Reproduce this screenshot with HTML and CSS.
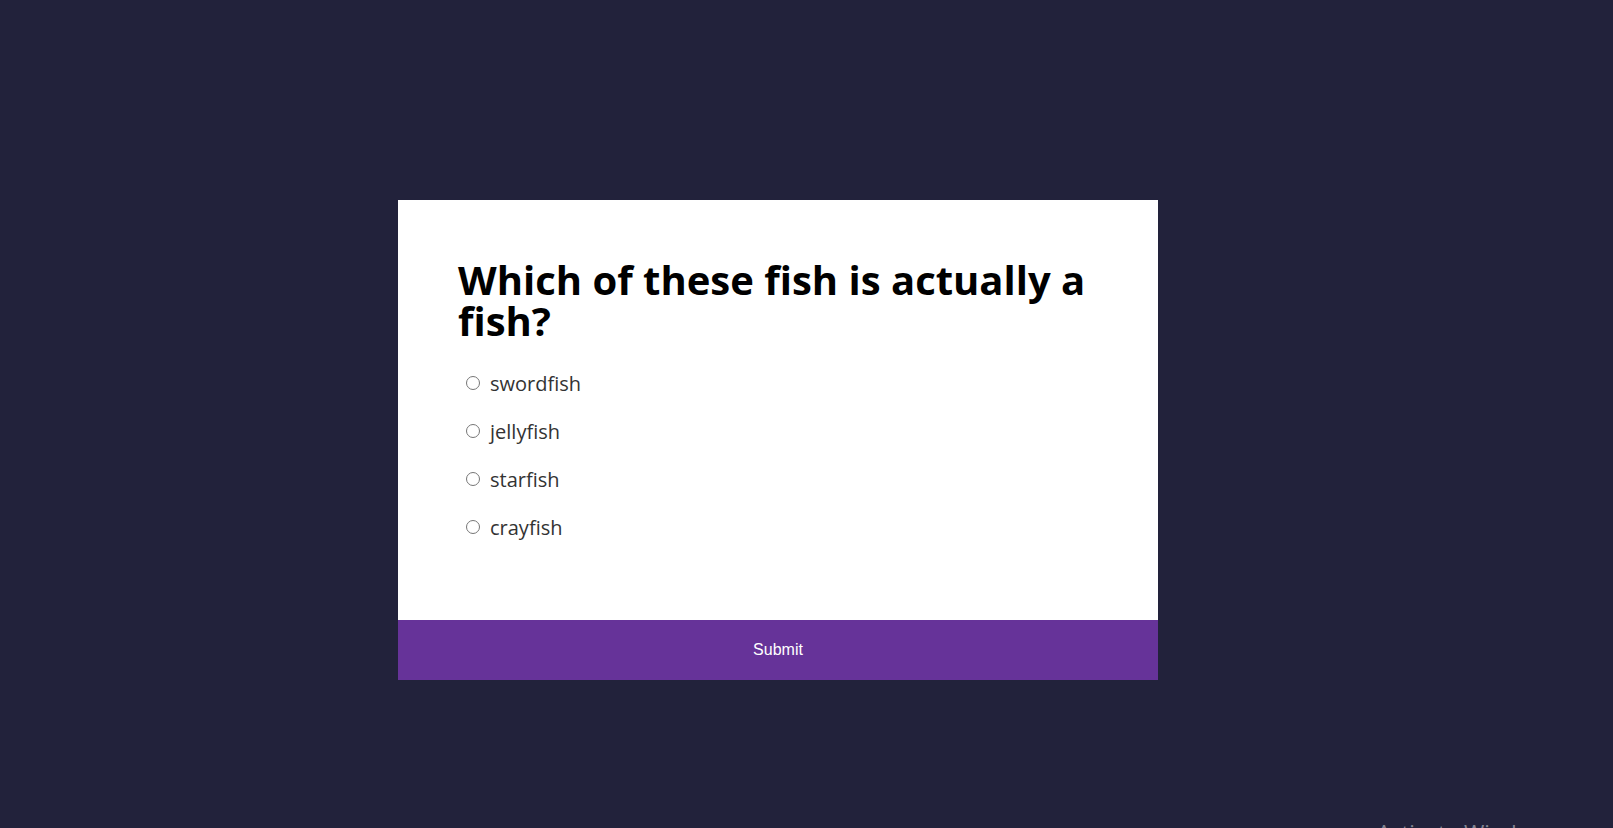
FILE: index.html
```html
<!DOCTYPE html>
<html lang="en">
<head>
<meta charset="utf-8">
<title>Quiz</title>
<link rel="stylesheet" href="styles.css">
</head>
<body>
<div class="page">
  <div class="quiz">
    <div class="quiz-body">
      <h2 class="question">Which of these fish is actually a fish?</h2>
      <ul class="answers">
        <li class="answer"><input type="radio" name="answer" id="a"><label for="a">swordfish</label></li>
        <li class="answer"><input type="radio" name="answer" id="b"><label for="b">jellyfish</label></li>
        <li class="answer"><input type="radio" name="answer" id="c"><label for="c">starfish</label></li>
        <li class="answer"><input type="radio" name="answer" id="d"><label for="d">crayfish</label></li>
      </ul>
    </div>
    <button class="submit">Submit</button>
  </div>
</div>
<div class="watermark">Activate Windows</div>
</body>
</html>
```

FILE: styles.css
```css
html, body {
  margin: 0;
  padding: 0;
  height: 100%;
  overflow: hidden;
}

body {
  background: #22223b;
  font-family: "Open Sans", "Noto Sans", sans-serif;
}

.page {
  padding: 200px 0 0 398px;
}

.quiz {
  width: 760px;
  background: #ffffff;
  display: flex;
  flex-direction: column;
}

.quiz-body {
  height: 420px;
  box-sizing: border-box;
  padding: 59px 60px 0 60px;
}

.question {
  margin: 0;
  font-size: 40px;
  line-height: 41px;
  font-weight: 700;
  color: #000000;
}

.answers {
  list-style: none;
  margin: 18px 0 0 0;
  padding: 0;
}

.answer {
  display: flex;
  align-items: center;
  height: 48px;
  font-size: 20px;
  color: #333333;
}

.answer input {
  margin: 0 10px 0 8px;
  width: 14px;
  height: 14px;
}

.submit {
  height: 60px;
  border: none;
  margin: 0;
  background: #663399;
  color: #ffffff;
  font-family: "Liberation Sans", Arial, sans-serif;
  font-size: 16px;
  cursor: pointer;
}

.watermark {
  position: absolute;
  left: 1377px;
  top: 817px;
  font-family: "Open Sans", sans-serif;
  font-size: 22px;
  line-height: 30px;
  color: rgba(255, 255, 255, 0.45);
  white-space: nowrap;
}
```
